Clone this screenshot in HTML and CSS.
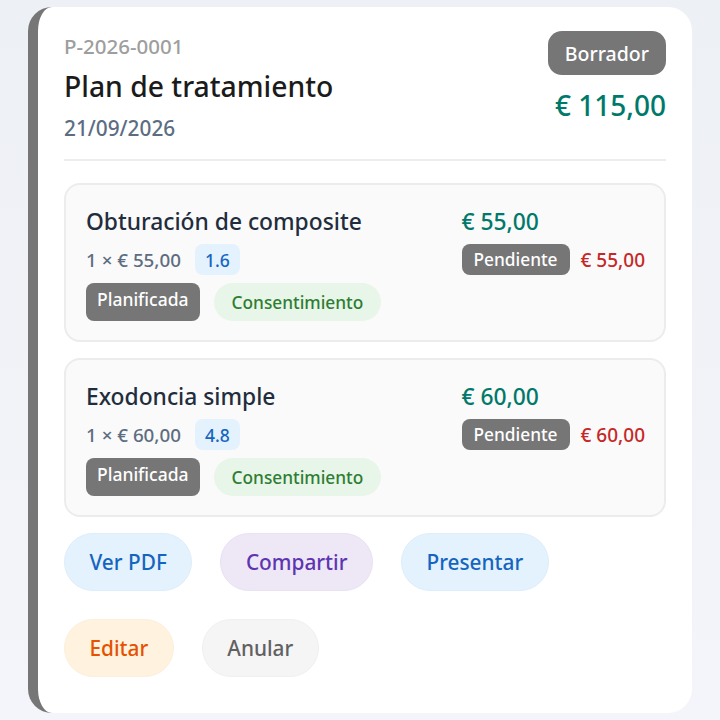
FILE: index.html
```html
<!DOCTYPE html>
<html lang="es">
<head>
<meta charset="utf-8">
<title>Plan de tratamiento</title>
<link rel="stylesheet" href="styles.css">
</head>
<body>
<div class="card">
  <div class="header">
    <div class="header-main">
      <div class="code">P-2026-0001</div>
      <div class="title">Plan de tratamiento</div>
      <div class="date">21/09/2026</div>
    </div>
    <div class="header-side">
      <span class="status">Borrador</span>
      <div class="total">€ 115,00</div>
    </div>
  </div>
  <div class="divider"></div>
  <div class="items">
    <div class="item">
      <div class="item-main">
        <div class="item-name">Obturación de composite</div>
        <div class="item-row">
          <span class="qty">1 × € 55,00</span>
          <span class="tooth">1.6</span>
        </div>
        <div class="item-row">
          <span class="tag-gray">Planificada</span>
          <span class="chip-green">Consentimiento</span>
        </div>
      </div>
      <div class="item-side">
        <div class="item-price">€ 55,00</div>
        <div class="item-row">
          <span class="tag-gray tag-pay">Pendiente</span>
          <span class="due">€ 55,00</span>
        </div>
      </div>
    </div>
    <div class="item">
      <div class="item-main">
        <div class="item-name">Exodoncia simple</div>
        <div class="item-row">
          <span class="qty">1 × € 60,00</span>
          <span class="tooth">4.8</span>
        </div>
        <div class="item-row">
          <span class="tag-gray">Planificada</span>
          <span class="chip-green">Consentimiento</span>
        </div>
      </div>
      <div class="item-side">
        <div class="item-price">€ 60,00</div>
        <div class="item-row">
          <span class="tag-gray tag-pay">Pendiente</span>
          <span class="due">€ 60,00</span>
        </div>
      </div>
    </div>
  </div>
  <div class="actions">
    <button class="btn btn-blue">Ver PDF</button>
    <button class="btn btn-purple">Compartir</button>
    <button class="btn btn-blue">Presentar</button>
    <button class="btn btn-orange">Editar</button>
    <button class="btn btn-gray">Anular</button>
  </div>
</div>
</body>
</html>
```

FILE: styles.css
```css
* { box-sizing: border-box; }

html, body {
  height: 100%;
}

body {
  margin: 0;
  padding: 7px 28px;
  background: linear-gradient(180deg, #edf0f4 0%, #f4f5fa 100%);
  font-family: "Noto Sans", "Open Sans", sans-serif;
}

.card {
  height: 706px;
  background: #ffffff;
  border-left: 10px solid #767676;
  border-radius: 24px;
  padding: 24px 26px 38px 26px;
}

.header {
  display: flex;
  justify-content: space-between;
  align-items: flex-start;
}

.header-main {
  display: flex;
  flex-direction: column;
}

.code {
  margin-top: 1px;
  font-size: 20.5px;
  line-height: 28px;
  font-weight: 500;
  color: #9e9e9e;
}

.title {
  margin-top: 6px;
  font-size: 28.3px;
  line-height: 40px;
  font-weight: 500;
  color: #1b1b1b;
}

.date {
  margin-top: 7px;
  font-size: 20.8px;
  line-height: 30px;
  font-weight: 500;
  color: #5c6d82;
}

.header-side {
  display: flex;
  flex-direction: column;
  align-items: flex-end;
}

.status {
  display: inline-flex;
  align-items: center;
  height: 44px;
  padding: 0 17px;
  border-radius: 14px;
  background: #767676;
  color: #ffffff;
  font-size: 19.5px;
  font-weight: 500;
}

.total {
  margin-top: 11px;
  font-size: 28px;
  line-height: 38px;
  font-weight: 500;
  color: #00796b;
}

.divider {
  margin-top: 16px;
  border-top: 2px solid #ededed;
}

.items {
  margin-top: 22px;
  display: flex;
  flex-direction: column;
  gap: 16px;
}

.item {
  display: flex;
  justify-content: space-between;
  align-items: flex-start;
  background: #fafafa;
  border: 2px solid #ececec;
  border-radius: 16px;
  padding: 21px 19px 19px 20px;
}

.item-main, .item-side {
  display: flex;
  flex-direction: column;
  gap: 8px;
}

.item-name, .item-price {
  font-size: 22.8px;
  line-height: 32px;
  font-weight: 500;
  color: #1f2d3d;
  margin-bottom: -2px;
}

.item-price {
  color: #00796b;
}

.item-row {
  display: flex;
  align-items: center;
  gap: 14px;
}

.item-side .item-row {
  gap: 11px;
}

.qty {
  font-size: 18.8px;
  font-weight: 500;
  color: #5d6d80;
}

.tooth {
  display: inline-flex;
  align-items: center;
  height: 31px;
  padding: 0 10px;
  border-radius: 8px;
  background: #e3f2fd;
  color: #1565c0;
  font-size: 17.5px;
  font-weight: 500;
}

.tag-gray {
  display: inline-flex;
  align-items: flex-start;
  height: 38px;
  padding: 4px 11px 0 11px;
  border-radius: 8px;
  background: #767676;
  color: #ffffff;
  font-size: 17.5px;
  font-weight: 500;
}

.tag-pay {
  height: 31px;
  padding: 0 12px;
  align-items: center;
  font-size: 17.3px;
}

.chip-green {
  display: inline-flex;
  align-items: center;
  height: 38px;
  padding: 0 18px;
  border-radius: 19px;
  background: #e8f5e9;
  color: #2e7d32;
  font-size: 17.3px;
  font-weight: 500;
}

.due {
  font-size: 19px;
  font-weight: 500;
  color: #c62828;
}

.actions {
  margin-top: 16px;
  display: flex;
  flex-wrap: wrap;
  gap: 28px;
  padding-right: 100px;
}

.btn {
  height: 58px;
  padding: 0 24.5px;
  border-radius: 29px;
  border: 1px solid transparent;
  font-family: inherit;
  font-size: 20.8px;
  font-weight: 500;
  cursor: pointer;
}

.btn-blue {
  background: #e3f2fd;
  border-color: #ddeefb;
  color: #1565c0;
}

.btn-purple {
  background: #ede7f6;
  border-color: #e8e2f3;
  color: #5e35b1;
}

.btn-orange {
  background: #fff3e0;
  border-color: #fcefdc;
  color: #e65100;
}

.btn-gray {
  background: #f5f5f5;
  border-color: #f0f0f0;
  color: #616161;
}
```
